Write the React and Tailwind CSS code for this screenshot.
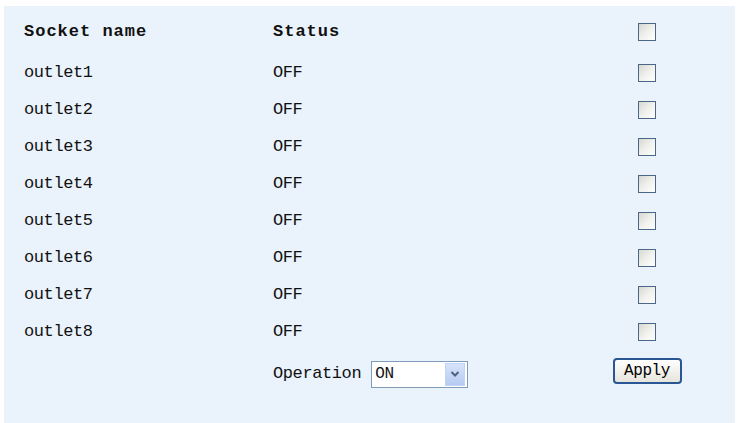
import React, { useState } from "react";

const outlets = [1, 2, 3, 4, 5, 6, 7, 8].map((n) => ({ name: "outlet" + n, status: "OFF" }));

function Box({ checked, onClick }) {
  return (
    <span
      onClick={onClick}
      className="block w-[18px] h-[18px] border border-[#4a6788] bg-gradient-to-br from-[#d8d8d2] via-[#f0f0ec] to-[#ffffff] cursor-pointer"
    >
      {checked && (
        <svg viewBox="0 0 16 16" className="w-full h-full">
          <path d="M4 8l3 3 5-6" stroke="#21a121" strokeWidth="2" fill="none" />
        </svg>
      )}
    </span>
  );
}

export default function App() {
  const [checks, setChecks] = useState(Array(9).fill(false));
  const toggle = (i) => setChecks(checks.map((c, j) => (j === i ? !c : c)));

  return (
    <div className="bg-white min-h-[423px] pl-[4px] pr-[3px] pt-[6px] [font-family:'Liberation_Mono','Courier_New',monospace] text-[#111] text-[17px] tracking-[-0.4px]">
      <div className="bg-[#eaf2fb] h-[417px] pl-[20px]">
        {/* header */}
        <div className="grid grid-cols-[249px_339px_70px] h-[48px] pt-[3px] items-center font-bold tracking-[1px]">
          <div>Socket name</div>
          <div>Status</div>
          <div className="flex justify-center">
            <Box checked={checks[0]} onClick={() => toggle(0)} />
          </div>
        </div>

        {outlets.map((o, i) => (
          <div key={o.name} className="grid grid-cols-[249px_339px_70px] h-[37px] items-center">
            <div>{o.name}</div>
            <div>{o.status}</div>
            <div className="flex justify-center">
              <Box checked={checks[i + 1]} onClick={() => toggle(i + 1)} />
            </div>
          </div>
        ))}

        {/* operation */}
        <div className="grid grid-cols-[249px_339px_70px] h-[46px] items-center">
          <div></div>
          <div className="flex items-center gap-[10px] pt-[2px]">
            <span>Operation</span>
            <div className="flex items-center w-[97px] h-[27px] border border-[#7f9db9] bg-white">
              <span className="flex-1 pl-[3px] text-[16px] leading-none">ON</span>
              <span className="w-[20px] h-[23px] mr-[2px] flex items-center justify-center bg-gradient-to-b from-[#d6e3fa] to-[#b6cbf2] border border-[#c3d3f4]">
                <svg viewBox="0 0 10 8" className="w-[10px] h-[8px]">
                  <path d="M1.5 2l3.5 3.5L8.5 2" stroke="#4d6185" strokeWidth="2" fill="none" />
                </svg>
              </span>
            </div>
          </div>
          <div className="flex justify-center pb-[4px]">
            <button className="w-[69px] h-[26px] rounded-[4px] border-2 border-[#2a5694] bg-gradient-to-b from-[#ffffff] to-[#e6e4dc] text-[16px] leading-none text-black">
              Apply
            </button>
          </div>
        </div>
      </div>
    </div>
  );
}
